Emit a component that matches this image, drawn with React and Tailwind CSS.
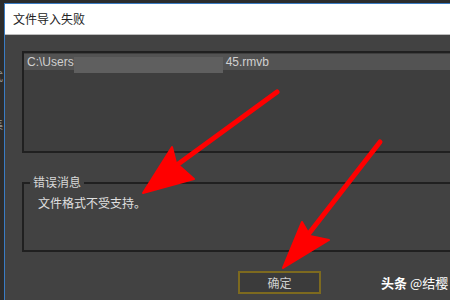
import React from 'react';

const cjk = { fontFamily: '"Noto Sans CJK SC", "Liberation Sans", sans-serif' };

// red hand-drawn arrows over the dialog
const Arrows = () => (
  <svg className="absolute inset-0 pointer-events-none" width="450" height="300" viewBox="0 0 450 300">
    <g fill="#ff0000" stroke="#ff0000" strokeLinecap="round" strokeLinejoin="round">
      <line x1="277" y1="92" x2="170" y2="170" strokeWidth="5" />
      <polygon points="143,193 172,147 176,163 194,179" strokeWidth="2" />
      <line x1="380" y1="142" x2="300" y2="245" strokeWidth="5" />
      <polygon points="283,268 302,222 310,236 329,240" strokeWidth="2" />
    </g>
  </svg>
);

const FileList = () => (
  <div className="h-[102px] mr-[-20px] border-t-2 border-l-2 border-b-2 border-[#202020] bg-[#3e3e3e] pt-[1px]">
    <div className="relative h-[16px] bg-[#535353] flex items-center text-[12px] text-[#d0d0d0] pl-[3px]" style={{ fontFamily: '"Liberation Sans", sans-serif' }}>
      <span>C:\Users</span>
      <span className="w-[149px] h-[16px] bg-[#5f5f5f] mt-[6px]" />
      <span className="ml-[3px]">45.rmvb</span>
    </div>
  </div>
);

const ErrorGroup = () => (
  <div className="relative mt-[29px] h-[70px] mr-[-20px] border-t-2 border-l-2 border-b-2 border-[#202020]">
    <span className="absolute left-[6px] top-[-10px] bg-[#424242] px-[3px] text-[12px] leading-[16px] text-[#d8d8d8]" style={cjk}>
      错误消息
    </span>
    <div className="pt-[11px] pl-[14px] text-[12px] leading-[16px] text-[#e0e0e0]" style={cjk}>
      文件格式不受支持。
    </div>
  </div>
);

export default function App() {
  return (
    <div className="relative w-[450px] h-[300px] overflow-hidden bg-[#2c2c2c] flex">
      <div className="w-[4px] flex flex-col pt-[70px] text-[11px] leading-[12px] text-[#9a9a9a] overflow-hidden" style={cjk}>
        <span className="ml-[-8px]">式</span>
        <span className="ml-[-8px] mt-[36px]">集</span>
      </div>
      <div className="flex-1 mt-[3px] border-l border-t border-[#3a7cc4] flex flex-col">
        <div className="h-[31px] bg-white border-b border-[#bdbdbd] flex items-center pl-[8px] text-[12px] text-[#222]" style={cjk}>
          文件导入失败
        </div>
        <div className="flex-1 bg-[#424242] pl-[17px] pt-[16px]">
          <FileList />
          <ErrorGroup />
          <div className="flex mt-[19px] items-center">
            <div className="ml-[216px] w-[83px] h-[23px] border-2 border-[#7d6a1f] bg-[#3b3b3b] flex items-center justify-center text-[12px] text-[#cfcfcf]" style={cjk}>
              确定
            </div>
            <div className="ml-[60px] text-[13px] text-white font-bold" style={cjk}>
              头条 <span className="font-normal">@结樱</span>
            </div>
          </div>
        </div>
      </div>
      <Arrows />
    </div>
  );
}
